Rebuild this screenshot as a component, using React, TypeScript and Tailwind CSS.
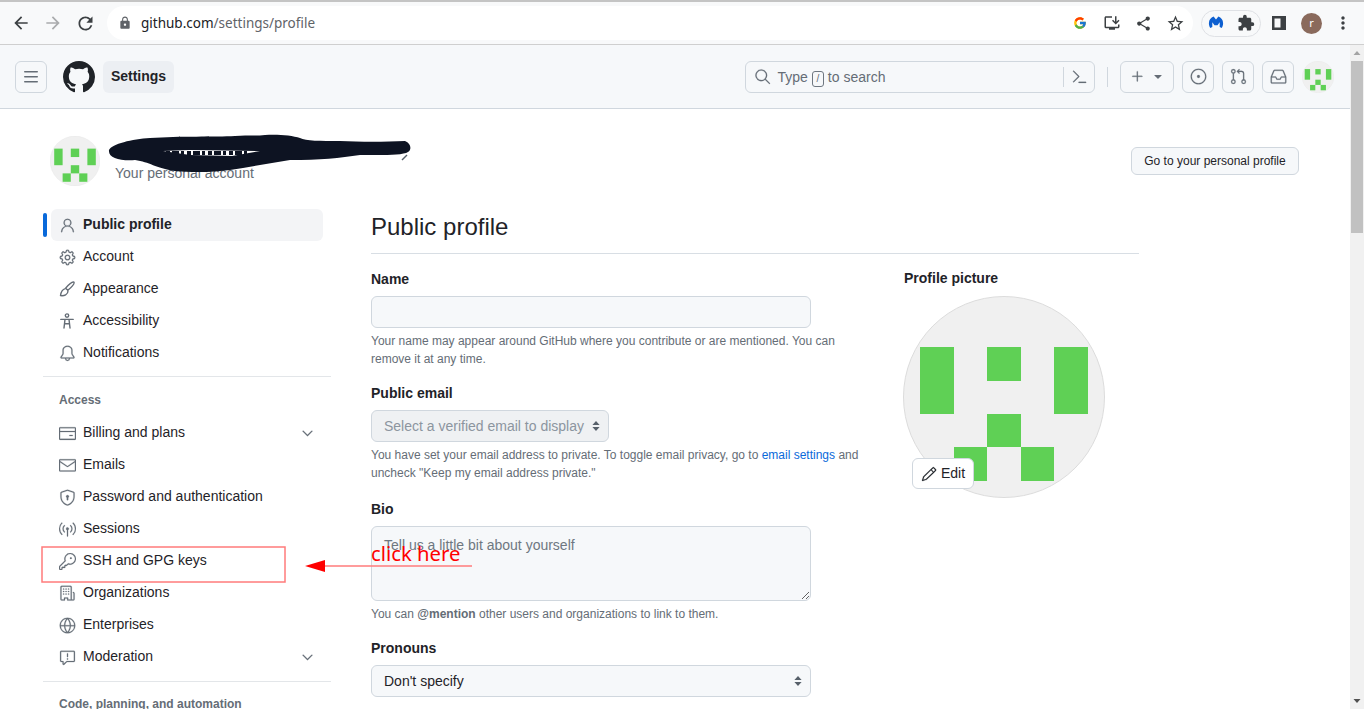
import React from "react";
import {
  GoPerson, GoGear, GoBell, GoCreditCard, GoMail, GoShieldLock, GoBroadcast, GoKey,
  GoOrganization, GoGlobe, GoReport, GoChevronDown, GoSearch, GoCommandPalette, GoPlus, GoTriangleDown, GoIssueOpened,
  GoGitPullRequest, GoInbox, GoPencil,
} from "react-icons/go";
import { MdArrowBack, MdArrowForward, MdRefresh, MdLock, MdInstallDesktop, MdShare, MdStarBorder, MdExtension, MdMoreVert } from "react-icons/md";
import { FcGoogle } from "react-icons/fc";

type IconProps = { className?: string };

function BarsIcon({ className }: IconProps) {
  return (
    <svg viewBox="0 0 16 16" fill="currentColor" className={className}>
      <path d="M1 2.75A.75.75 0 0 1 1.75 2h12.5a.75.75 0 0 1 0 1.5H1.750A.75.75 0 0 1 1 2.750Zm0 5A.75.75 0 0 1 1.750 7h12.500a.75.75 0 0 1 0 1.500H1.750A.75.75 0 0 1 1 7.750ZM1.750 12h12.500a.75.75 0 0 1 0 1.500H1.750a.75.75 0 0 1 0-1.500Z" />
    </svg>
  );
}

function GithubMark({ className }: IconProps) {
  return (
    <svg viewBox="0 0 16 16" fill="currentColor" className={className}>
      <path d="M8 0c4.42 0 8 3.58 8 8a8.013 8.013 0 0 1-5.45 7.59c-.4.08-.55-.17-.55-.38 0-.27.01-1.13.01-2.2 0-.75-.25-1.23-.54-1.48 1.78-.2 3.65-.88 3.65-3.95 0-.88-.31-1.59-.82-2.15.08-.2.36-1.02-.08-2.12 0 0-.67-.22-2.2.82-.64-.18-1.32-.27-2-.27-.68 0-1.36.09-2 .27-1.53-1.03-2.2-.82-2.2-.82-.44 1.1-.16 1.92-.08 2.12-.51.56-.82 1.28-.82 2.15 0 3.06 1.86 3.75 3.64 3.95-.23.2-.44.55-.51 1.07-.46.21-1.61.55-2.33-.66-.15-.24-.6-.83-1.23-.82-.67.01-.27.38.01.53.34.19.73.9.82 1.13.16.45.68 1.31 2.69.94 0 .67.01 1.3.01 1.49 0 .21-.15.45-.55.38A7.995 7.995 0 0 1 0 8c0-4.42 3.58-8 8-8Z" />
    </svg>
  );
}

function BrushIcon({ className }: IconProps) {
  return (
    <svg viewBox="0 0 16 16" fill="none" stroke="currentColor" strokeWidth="1.4" strokeLinejoin="round" className={className}>
      <path d="M14.900 1.100c-1.300-.8-5.300 2.500-8.300 6.100l2.200 2.100c3.600-3 7-6.900 6.100-8.200z" />
      <path d="M6.300 7.600C3.600 8.300 2.100 9.800 1.500 14.600c3.700.4 7.500-.6 7.600-5" />
    </svg>
  );
}

function AccessIcon({ className }: IconProps) {
  return (
    <svg viewBox="0 0 16 16" fill="none" stroke="currentColor" strokeWidth="1.4" strokeLinecap="round" strokeLinejoin="round" className={className}>
      <circle cx="8" cy="2.600" r="1.700" />
      <path d="M1.800 6.400h12.400M6 6.400 5 15M10 6.400 11 15M5.500 10.800h5" />
    </svg>
  );
}

function Identicon({ className }: { className: string }) {
  const rects = [
    [17, 51, 34, 67],
    [84, 51, 34, 34],
    [151, 51, 34, 67],
    [84, 118, 34, 33],
    [51, 151, 33, 34],
    [118, 151, 33, 34],
  ];
  return (
    <svg viewBox="0 0 202 202" className={className}>
      <circle cx="101" cy="101" r="100.500" fill="#f0f0f0" stroke="#dcdcdc" />
      {rects.map(([x, y, w, h]) => (
        <rect key={`${x}-${y}`} x={x} y={y} width={w} height={h} fill="#5fd055" />
      ))}
    </svg>
  );
}

function Stepper() {
  return (
    <svg viewBox="0 0 16 16" className="w-4 h-4 shrink-0" fill="#57606a">
      <path d="M4.400 7h7.200L8 3zM4.400 9h7.200L8 13z" />
    </svg>
  );
}

const octicon = "w-[17px] h-[17px] -mx-[0.5px] shrink-0 stroke-current stroke-[0.3]";

function NavItem({ icon: Icon, label, active, chevron, tall, raw }: { icon: React.ComponentType<{ className?: string }>; label: string; active?: boolean; chevron?: boolean; tall?: boolean; raw?: boolean }) {
  return (
    <div className={`relative flex items-center ml-2 w-[272px] rounded-md pl-2 pr-2 gap-2 text-[14px] ${tall ? "h-[33px]" : "h-8"} ${active ? "bg-[#f3f4f6] font-semibold" : ""}`}>
      {active && <span className="absolute -left-2 top-1 h-6 w-1 rounded-md bg-[#0969da]" />}
      <Icon className={`text-[#656d76] ${raw ? "w-4 h-4 shrink-0" : octicon}`} />
      <span className="flex-1 -mt-[2px]">{label}</span>
      {chevron && <GoChevronDown className={`text-[#656d76] ${octicon}`} />}
    </div>
  );
}

function HeaderBtn({ children, className = "w-8" }: { children: React.ReactNode; className?: string }) {
  return <div className={`h-8 rounded-md border border-[#d0d7de] flex items-center justify-center text-[#656d76] ${className}`}>{children}</div>;
}

function Label({ children, className = "" }: { children: React.ReactNode; className?: string }) {
  return <div className={`h-[21px] leading-[21px] text-[14px] font-semibold ${className}`}>{children}</div>;
}

function Hint({ children }: { children: React.ReactNode }) {
  return <p className="mt-1 text-[12px] leading-[18px] text-[#656d76]">{children}</p>;
}

export default function App() {
  return (
    <div className="relative h-[709px] w-[1364px] overflow-hidden bg-white text-[#1f2328] font-['Liberation_Sans',Arial,sans-serif]">
      {/* Browser toolbar */}
      <div className="h-[45px] bg-[#f8f9fa] border-t-2 border-b border-t-[#c4c4c4] border-b-[#cfcfcf] flex items-center font-['Noto_Sans',sans-serif]">
        <div className="w-[107px] flex items-center pl-[11px] gap-[12px] text-[#3c4043]">
          <MdArrowBack className="w-5 h-5" />
          <MdArrowForward className="w-5 h-5 text-[#a9abad]" />
          <MdRefresh className="w-[21px] h-[21px]" />
        </div>
        <div className="w-[1086px] h-[34px] bg-white rounded-full flex items-center pl-[11px] pr-[8px]">
          <MdLock className="w-[14px] h-[14px] text-[#5f6368]" />
          <span className="ml-[9px] text-[13.5px] text-[#202124]">github.com<span className="text-[#5f6368]">/settings/profile</span></span>
          <div className="ml-auto flex items-center gap-[14px] text-[#3c4043]">
            <FcGoogle className="w-[14px] h-[14px] mr-[2px]" />
            <MdInstallDesktop className="w-[18px] h-[18px]" />
            <MdShare className="w-[17px] h-[17px]" />
            <MdStarBorder className="w-[19px] h-[19px]" />
          </div>
        </div>
        <div className="ml-2 w-[60px] h-[27px] rounded-full border border-[#dfe1e5] flex items-center justify-between pl-[6px] pr-[5px]">
          <svg viewBox="0 0 16 16" className="w-4 h-4">
            <path d="M8 4.600 5.600 1.600C3 2.400.9 5 .9 8.300c0 1.800.5 3.400 1.400 4.700l2-1.100V7.200l2.200 3.100h3l2.200-3.100v4.700l2 1.100c.9-1.300 1.400-2.900 1.400-4.700 0-3.300-2.100-5.900-4.700-6.700z" fill="#0d5fd0" />
          </svg>
          <MdExtension className="w-[18px] h-[18px] text-[#3c4043]" />
        </div>
        <svg viewBox="0 0 14 14" className="w-[14px] h-[14px] ml-[11px]">
          <path fillRule="evenodd" d="M0 0h14v14H0zM2.500 2.500v9h6v-9z" fill="#3c4043" />
        </svg>
        <div className="ml-[15px] w-[21px] h-[21px] rounded-full bg-[#8a6a5c] text-white text-[11px] flex items-center justify-center">r</div>
        <MdMoreVert className="ml-[11px] w-5 h-5 text-[#3c4043]" />
      </div>

      <div className="flex h-[664px]">
        <div className="w-[1350px] shrink-0">
          {/* GitHub header */}
          <div className="h-[64px] bg-[#f6f8fa] border-b border-[#d0d7de] flex items-center pl-[15px] pr-4">
            <HeaderBtn><BarsIcon className="w-4 h-4" /></HeaderBtn>
            <GithubMark className="ml-4 w-8 h-8 text-[#1f2328]" />
            <div className="ml-2 h-8 w-[71px] rounded-md bg-[#eceff3] flex items-center justify-center text-[14px] font-semibold">Settings</div>
            <div className="ml-[571px] w-[350px] h-8 rounded-md border border-[#d0d7de] flex items-center pl-2 pr-[7px] text-[14px] text-[#656d76]">
              <GoSearch className={`${octicon} mr-[7px]`} />
              <span className="mt-[2px]">Type</span>
              <span className="mx-1 w-3 h-4 mt-1 rounded-[3px] border border-[#6e7781] flex items-center justify-center text-[10px] leading-none">/</span>
              <span className="mt-[2px]">to search</span>
              <span className="ml-auto h-5 border-l border-[#d0d7de]" />
              <GoCommandPalette className={`${octicon} ml-[7px]`} />
            </div>
            <span className="ml-3 h-5 border-l border-[#d0d7de]" />
            <HeaderBtn className="ml-3 w-[54px] gap-[5px]"><GoPlus className={octicon} /><GoTriangleDown className="w-[14px] h-[14px]" /></HeaderBtn>
            <HeaderBtn className="ml-2 w-8"><GoIssueOpened className={octicon} /></HeaderBtn>
            <HeaderBtn className="ml-2 w-8"><GoGitPullRequest className={octicon} /></HeaderBtn>
            <HeaderBtn className="ml-2 w-8"><GoInbox className={octicon} /></HeaderBtn>
            <Identicon className="ml-2 w-8 h-8" />
          </div>

          {/* Account row */}
          <div className="flex items-center justify-between pt-[27px] pl-[50px] pr-[51px]">
            <div className="flex items-center h-[50px]">
              <Identicon className="w-[50px] h-[50px]" />
              <div className="ml-[15px] mt-[24px] text-[14px] leading-5 text-[#656d76]">Your personal account</div>
            </div>
            <div className="h-7 w-[168px] rounded-md border border-[#d0d7de] bg-[#f6f8fa] flex items-center justify-center text-[12px] font-medium">Go to your personal profile</div>
          </div>

          <div className="flex mt-[23px] pl-[43px]">
            {/* Sidebar */}
            <div className="w-[288px] shrink-0">
              <NavItem icon={GoPerson} label="Public profile" active />
              <NavItem icon={GoGear} label="Account" />
              <NavItem icon={BrushIcon} label="Appearance" raw />
              <NavItem icon={AccessIcon} label="Accessibility" raw />
              <NavItem icon={GoBell} label="Notifications" />
              <div className="mt-[7px] border-t border-[#e3e6e9]" />
              <div className="mt-4 mb-[9px] ml-4 h-[15px] leading-[15px] text-[12px] font-semibold text-[#656d76]">Access</div>
              <NavItem icon={GoCreditCard} label="Billing and plans" chevron />
              <NavItem icon={GoMail} label="Emails" />
              <NavItem icon={GoShieldLock} label="Password and authentication" />
              <NavItem icon={GoBroadcast} label="Sessions" />
              <NavItem icon={GoKey} label="SSH and GPG keys" />
              <NavItem icon={GoOrganization} label="Organizations" />
              <NavItem icon={GoGlobe} label="Enterprises" />
              <NavItem icon={GoReport} label="Moderation" chevron tall />
              <div className="mt-[7px] border-t border-[#e3e6e9]" />
              <div className="mt-[15px] ml-4 h-[15px] leading-[15px] text-[12px] font-semibold text-[#656d76] whitespace-nowrap">Code, planning, and automation</div>
            </div>

            {/* Main */}
            <div className="ml-10 w-[768px]">
              <h1 className="h-[45px] leading-9 text-[24px] border-b border-[#d8dee4]">Public profile</h1>
              <div className="flex">
                <div className="w-[488px]">
                  <Label className="mt-[15px]">Name</Label>
                  <input className="mt-[6px] block w-[440px] h-8 rounded-md border border-[#d0d7de] bg-[#f6f8fa]" />
                  <Hint>Your name may appear around GitHub where you contribute or are mentioned. You can remove it at any time.</Hint>
                  <Label className="mt-[15px]">Public email</Label>
                  <div className="mt-[6px] w-[238px] h-8 rounded-md border border-[#d0d7de] bg-[#eff1f3] flex items-center justify-between pl-3 pr-[4px] text-[14px] text-[#8c959f]">
                    <span className="whitespace-nowrap">Select a verified email to display</span>
                    <Stepper />
                  </div>
                  <Hint>You have set your email address to private. To toggle email privacy, go to <span className="text-[#0969da]">email settings</span> and uncheck "Keep my email address private."</Hint>
                  <Label className="mt-[17px]">Bio</Label>
                  <textarea
                    placeholder="Tell us a little bit about yourself"
                    className="mt-[6px] block w-[440px] h-[75px] rounded-md border border-[#d0d7de] bg-[#f6f8fa] px-3 py-2 text-[14px] leading-5 placeholder:text-[#6e7781]"
                  />
                  <Hint>You can <span className="font-bold">@mention</span> other users and organizations to link to them.</Hint>
                  <Label className="mt-[15px]">Pronouns</Label>
                  <div className="mt-[6px] w-[440px] h-8 rounded-md border border-[#d0d7de] bg-[#f6f8fa] flex items-center justify-between pl-3 pr-[4px] text-[14px]">
                    <span>Don't specify</span>
                    <Stepper />
                  </div>
                </div>
                <div className="ml-[45px] mt-[14px]">
                  <Label>Profile picture</Label>
                  <div className="relative -ml-[1px] mt-[7px] w-[202px] h-[202px]">
                    <Identicon className="w-[202px] h-[202px]" />
                    <div className="absolute left-[9px] top-[162px] w-[62px] h-[31px] rounded-md border border-[#d0d7de] bg-white flex items-center justify-center gap-1 text-[14px]">
                      <GoPencil className="w-4 h-4 stroke-current stroke-[0.3]" />Edit
                    </div>
                  </div>
                </div>
              </div>
            </div>
          </div>
        </div>

        {/* Scrollbar */}
        <div className="relative w-[14px] bg-[#f1f1f1] flex flex-col items-center">
          <svg viewBox="0 0 14 16" className="w-[14px] h-4 shrink-0"><path d="M3.500 10h7L7 6z" fill="#a3a3a3" /></svg>
          <div className="w-[12px] h-[172px] bg-[#c1c1c1]" />
          <svg viewBox="0 0 14 16" className="mt-auto w-[14px] h-4 shrink-0"><path d="M3.500 6h7L7 10z" fill="#505050" /></svg>
        </div>
      </div>

      {/* Annotations drawn over the page */}
      <svg className="absolute left-0 top-0 pointer-events-none" width="1364" height="709" viewBox="0 0 1364 709">
        <path d="M402 160L407 155" stroke="#57606a" strokeWidth="1.500" />
        <path d="M109 150C112 144 132 139 150 138C180 136 215 137 235 136C250 135 258 136 265 135C275 134 292 135 300 138C306 141 320 141 340 141C360 142 385 142 405 141C411 143 412 150 408 152C402 156 375 155 360 155C340 158 320 160 290 160C270 163 250 167 230 170C215 172 195 173 175 171C155 168 150 162 135 160C120 161 108 158 109 150Z" fill="#0d1322" />
        <path d="M163 151L190 155L232 156L260 151L225 150.500L190 150Z" fill="#ffffff" />
        <line x1="166" y1="153" x2="250" y2="153" stroke="#0d1322" strokeWidth="4" strokeDasharray="4 2 7 2 3 3" />
        <rect x="42" y="547" width="243" height="35" fill="none" stroke="#ff7b7b" strokeWidth="1.500" />
        <line x1="318" y1="566" x2="472" y2="566" stroke="#ff7b7b" strokeWidth="1.500" />
        <path d="M305 566L325 560V572Z" fill="#ff0000" />
      </svg>
      <div className="absolute left-[371px] top-[539px] text-[20.3px] leading-7 text-[#ff0000] font-['Noto_Sans',sans-serif]">click here</div>
    </div>
  );
}
